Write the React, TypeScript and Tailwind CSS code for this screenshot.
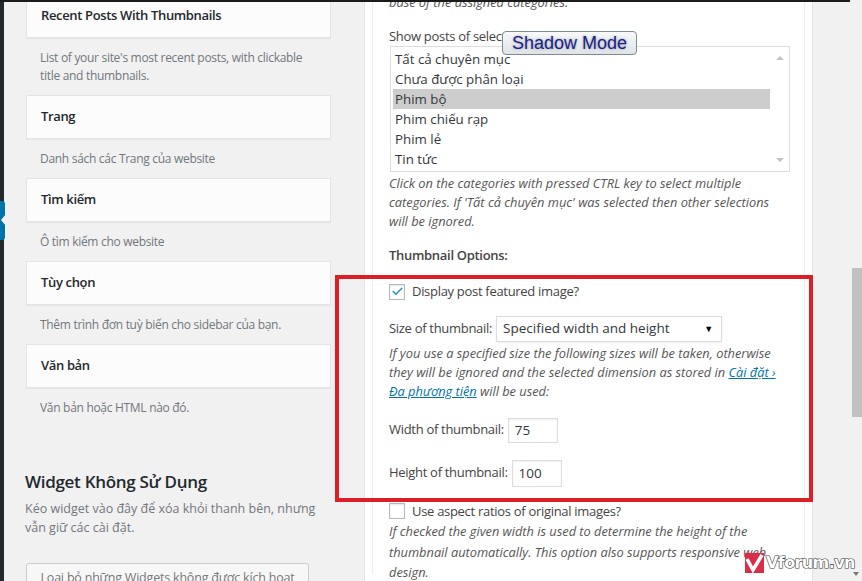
import { Check } from 'lucide-react';

const widgets = [
  { title: 'Recent Posts With Thumbnails', desc: ["List of your site's most recent posts, with clickable", 'title and thumbnails.'] },
  { title: 'Trang', desc: ['Danh sách các Trang của website'] },
  { title: 'Tìm kiếm', desc: ['Ô tìm kiếm cho website'] },
  { title: 'Tùy chọn', desc: ['Thêm trình đơn tuỳ biến cho sidebar của bạn.'] },
  { title: 'Văn bản', desc: ['Văn bản hoặc HTML nào đó.'] },
];

const categories = ['Tất cả chuyên mục', 'Chưa được phân loại', 'Phim bộ', 'Phim chiếu rạp', 'Phim lẻ', 'Tin tức'];

function Checkbox({ checked }: { checked?: boolean }) {
  return (
    <span className="flex h-[16px] w-[16px] shrink-0 items-center justify-center border border-[#b4b9be] bg-white shadow-[inset_0_1px_2px_rgba(0,0,0,0.1)]">
      {checked && <Check size={13} strokeWidth={2.5} className="text-[#1e8cbe]" />}
    </span>
  );
}

export default function App() {
  return (
    <div className="relative h-[581px] w-[862px] overflow-hidden bg-[#f1f1f1] font-['Open_Sans',sans-serif] text-[13px] text-[#444]">
      <div className="flex h-full">
        {/* admin menu edge */}
        <div className="relative h-full w-[4px] shrink-0 bg-[#23282d]">
          <div className="absolute left-0 top-[201px] h-[39px] w-[5px] rounded-r-[3px] bg-[#0073aa]" />
          <div className="absolute left-[1px] top-[214px] h-0 w-0 border-y-[6px] border-r-[5px] border-y-transparent border-r-[#f1f1f1]" />
        </div>

        {/* available widgets */}
        <div className="ml-[22px] w-[305px] shrink-0">
          <div className="-mt-[6px]">
            {widgets.map((w) => (
              <div key={w.title}>
                <div className="flex h-[44px] items-center border border-[#e5e5e5] bg-[#fcfcfc] px-[14px] text-[13px] font-semibold tracking-[-0.35px] text-[#23282d] shadow-[0_1px_1px_rgba(0,0,0,0.04)]">
                  {w.title}
                </div>
                <div className="whitespace-nowrap px-[14px] pb-[10px] pt-[11px] text-[12px] leading-[18px] tracking-[-0.3px] text-[#72777c]">
                  {w.desc.map((d) => (
                    <div key={d}>{d}</div>
                  ))}
                </div>
              </div>
            ))}
          </div>
          <h2 className="-ml-[1px] mt-[43px] text-[17px] font-semibold leading-[24px] tracking-[-0.3px] text-[#23282d]">
            Widget Không Sử Dụng
          </h2>
          <p className="-ml-[1px] mt-[5px] whitespace-nowrap text-[12.5px] leading-[19px] text-[#72777c]">
            Kéo widget vào đây để xóa khỏi thanh bên, nhưng
            <br />
            vẫn giữ các cài đặt.
          </p>
          <button className="mt-[26px] h-[30px] w-[283px] rounded-[3px] border border-[#ccc] bg-[#f7f7f7] text-[12.5px] tracking-[-0.2px] text-[#777]">
            Loại bỏ những Widgets không được kích hoạt
          </button>
        </div>

        {/* widget settings */}
        <div className="ml-[33px] h-full w-[449px] shrink-0 border-x border-[#e5e5e5] bg-white px-[7px]">
          <div className="h-full border-x border-[#eee] px-[16px] tracking-[-0.3px]">
            <p className="-mt-[7px] text-[12.8px] italic leading-[19px] tracking-normal text-[#555]">
              base of the assigned categories.
            </p>
            <div className="mt-[15px] leading-[19px]">Show posts of selected categories:</div>
            <div className="ml-[1px] flex h-[126px] w-[400px] border border-[#ddd] bg-white tracking-normal">
              <div className="flex-1 py-[2px] pl-[2px]">
                {categories.map((c) => (
                  <div
                    key={c}
                    className={`h-[20px] pl-[2px] text-[13.3px] leading-[20px] text-[#32373c] ${c === 'Phim bộ' ? 'bg-[#cdcdcd]' : ''}`}
                  >
                    {c}
                  </div>
                ))}
              </div>
              <div className="flex w-[19px] flex-col items-center justify-between py-[9px]">
                <span className="h-0 w-0 border-x-[4px] border-b-[4px] border-x-transparent border-b-[#c3c3c3]" />
                <span className="h-0 w-0 border-x-[4px] border-t-[4px] border-x-transparent border-t-[#c3c3c3]" />
              </div>
            </div>
            <p className="mt-[2px] text-[12.8px] italic leading-[19px] tracking-normal text-[#555]">
              Click on the categories with pressed CTRL key to select multiple
              <br />
              categories. If 'Tất cả chuyên mục' was selected then other selections
              <br />
              will be ignored.
            </p>
            <div className="mt-[15px] font-semibold leading-[19px]">Thumbnail Options:</div>

            <label className="mt-[17px] flex items-center gap-[7px]">
              <Checkbox checked />
              Display post featured image?
            </label>

            <div className="mt-[14px] flex items-center gap-[4px]">
              <span>Size of thumbnail:</span>
              <div className="flex h-[26px] w-[226px] items-center justify-between border border-[#ddd] bg-white pl-[6px] pr-[8px] text-[13.5px] tracking-normal text-[#32373c] shadow-[0_1px_2px_rgba(0,0,0,0.07)]">
                Specified width and height
                <span className="text-[9px] text-black">▼</span>
              </div>
            </div>
            <p className="mt-[2px] text-[12.8px] italic leading-[19px] tracking-normal text-[#555]">
              If you use a specified size the following sizes will be taken, otherwise
              <br />
              they will be ignored and the selected dimension as stored in{' '}
              <a className="text-[#0073aa] underline">Cài đặt ›</a>
              <br />
              <a className="text-[#0073aa] underline">Đa phương tiện</a> will be used:
            </p>

            <div className="mt-[17px] flex items-center gap-[4px]">
              <span>Width of thumbnail:</span>
              <div className="flex h-[25px] w-[50px] items-center border border-[#ddd] px-[6px] text-[13.5px] tracking-normal text-[#32373c] shadow-[inset_0_1px_2px_rgba(0,0,0,0.07)]">
                75
              </div>
            </div>
            <div className="mt-[17px] flex items-center gap-[4px]">
              <span>Height of thumbnail:</span>
              <div className="flex h-[27px] w-[50px] items-center border border-[#ddd] px-[6px] text-[13.5px] tracking-normal text-[#32373c] shadow-[inset_0_1px_2px_rgba(0,0,0,0.07)]">
                100
              </div>
            </div>

            <label className="mt-[15px] flex items-center gap-[7px]">
              <Checkbox />
              Use aspect ratios of original images?
            </label>
            <p className="text-[12.8px] italic leading-[20.5px] tracking-normal text-[#555]">
              If checked the given width is used to determine the height of the
              <br />
              thumbnail automatically. This option also supports responsive web
              <br />
              design.
            </p>
          </div>
        </div>

        {/* page scrollbar */}
        <div className="ml-auto w-[10px] shrink-0 pt-[268px]">
          <div className="h-[149px] bg-[#c1c1c1]" />
        </div>
      </div>

      {/* top edge of the window */}
      <div className="absolute left-0 top-0 h-[2px] w-[850px] bg-[#1b1b1b]" />

      {/* annotation */}
      <div className="absolute left-[335px] top-[275px] h-[227px] w-[478px] border-[4px] border-[#dc1f26]" />

      {/* extension badge */}
      <div className="absolute left-[502px] top-[31px] flex h-[24px] w-[135px] items-center justify-center rounded-[4px] border border-[#7f8b93] bg-gradient-to-b from-[#f7f9fa] to-[#dfe4e8] font-['Liberation_Sans',Arial,sans-serif] text-[18px] text-[#20208a] [text-shadow:0_0_3px_rgba(0,0,0,0.35)]">
        Shadow Mode
      </div>

      {/* watermark */}
      <div className="absolute left-[745px] top-[553px] flex items-center gap-[2px]">
        <svg width="19" height="20" viewBox="0 0 19 20">
          <rect width="19" height="20" fill="#d92d49" />
          <path d="M2 6 L8 17 L17 2" fill="none" stroke="#fff" strokeWidth="3.5" />
        </svg>
        <span className="font-['DejaVu_Sans',sans-serif] text-[16px] font-bold leading-[20px] tracking-[-0.6px] text-white [-webkit-text-stroke:1.2px_#3a3a3a] [paint-order:stroke_fill]">
          Vforum.vn
        </span>
      </div>
      <span className="absolute left-[853px] top-[572px] h-0 w-0 border-x-[3px] border-t-[4px] border-x-transparent border-t-[#777]" />
    </div>
  );
}
